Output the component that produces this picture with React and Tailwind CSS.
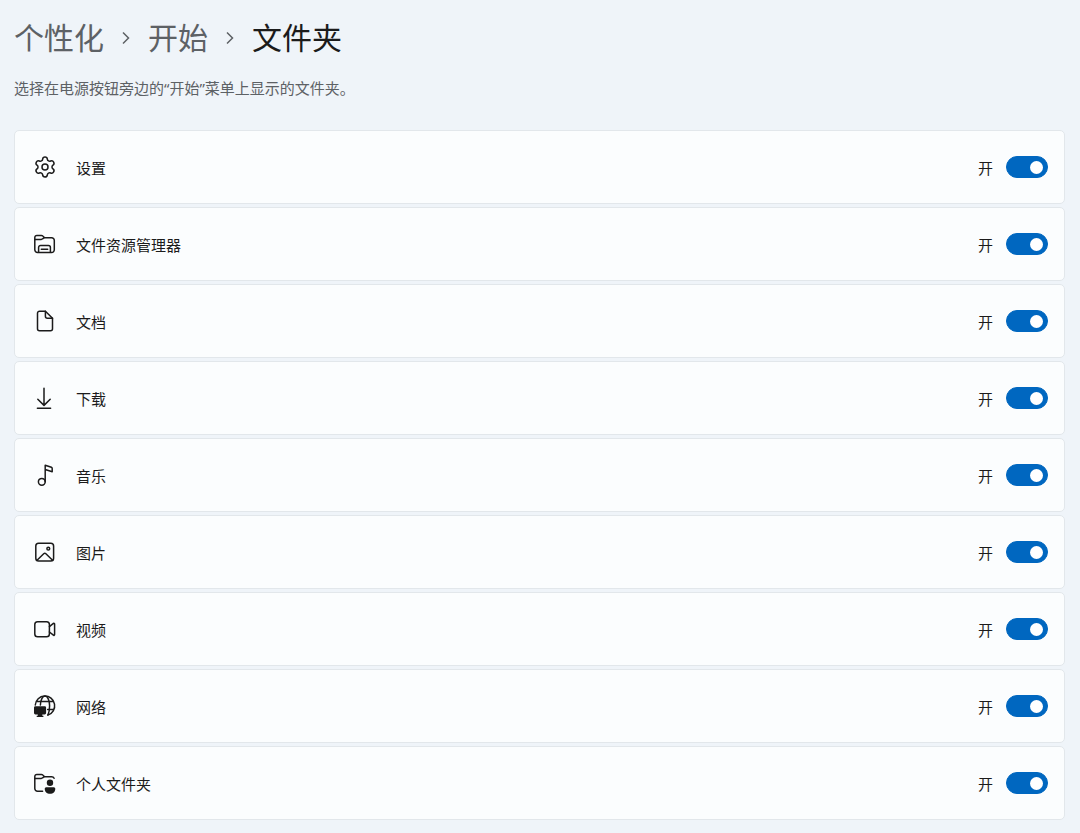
import { useState } from "react";
import { Settings } from "lucide-react";

function Icon({ children }) {
    return (
        <svg
            viewBox="0 0 24 24"
            fill="none"
            stroke="currentColor"
            strokeWidth="1.5"
            strokeLinecap="round"
            strokeLinejoin="round"
            className="size-6 shrink-0"
            aria-hidden="true"
        >
            {children}
        </svg>
    );
}

const SettingsIcon = () => (
    <Settings className="size-6 shrink-0" strokeWidth={1.5} aria-hidden="true" />
);

const ExplorerIcon = () => (
    <Icon>
        <path d="M1.8 7.4V5.4a2 2 0 0 1 2-2h4.6a2 2 0 0 1 1.4.6l1.8 1.7h7a2.7 2.7 0 0 1 2.7 2.7v9.4a2.7 2.7 0 0 1-2.7 2.7H4.5a2.7 2.7 0 0 1-2.7-2.7z" />
        <path d="M1.8 7.4h6.4a2 2 0 0 0 1.4-.6l1.6-1.1" />
        <path d="M5.6 20.3v-4.8a2 2 0 0 1 2-2h7.8a2 2 0 0 1 2 2v4.8M8.3 17.3h6.4" />
    </Icon>
);

const DocumentIcon = () => (
    <Icon>
        <path d="M12.4 2.2H6.5a2 2 0 0 0-2 2v15.6a2 2 0 0 0 2 2h11a2 2 0 0 0 2-2V9.3z" />
        <path d="M12.4 2.2v5.1a2 2 0 0 0 2 2h5.1" />
    </Icon>
);

const DownloadIcon = () => (
    <Icon>
        <path d="M11 2.2v17M4.8 13.2l6.2 6.2 6.2-6.2M4.4 22.2h13.2" />
    </Icon>
);

const MusicIcon = () => (
    <Icon>
        <circle cx="8.8" cy="18.8" r="3.4" />
        <path d="M12.2 18.8V2.2l6.2 2.1a1.2 1.2 0 0 1 .8 1.1v3.4l-7-2.3" />
    </Icon>
);

const PictureIcon = () => (
    <Icon>
        <rect x="2.8" y="3.2" width="17.8" height="17.8" rx="2.8" />
        <circle cx="15.3" cy="8.7" r="1.4" />
        <path d="m4 20.2 6.7-6.4a1.6 1.6 0 0 1 2.2 0l6.7 6.4" />
    </Icon>
);

const VideoIcon = () => (
    <Icon>
        <rect x="1.8" y="4.8" width="14.6" height="15" rx="2.8" />
        <path d="m16.4 9.6 4-3.2c.5-.4 1.2 0 1.2.6v10.6c0 .6-.7 1-1.2.6l-4-3.2" />
    </Icon>
);

const NetworkIcon = () => (
    <Icon>
        <path d="M2.3 11a9.7 9.7 0 1 1 12.6 10M3.2 7.6h17.4M14.6 15.4h6.2" />
        <path d="M7.4 11C7.6 6 9.5 2.1 12 2.1s4.6 4.2 4.6 9.6-.7 7.3-1.7 9.3" />
        <path
            d="M2.4 12.2h9.3a1.4 1.4 0 0 1 1.4 1.4V19a1.4 1.4 0 0 1-1.4 1.4H9.3v1.4h1.1v1.1H3.7v-1.1h1.1v-1.4H2.4A1.4 1.4 0 0 1 1 19v-5.4a1.4 1.4 0 0 1 1.4-1.4z"
            fill="currentColor"
            stroke="none"
        />
    </Icon>
);

const PersonalFolderIcon = () => (
    <Icon>
        <path d="M9.6 20.3H4.5a2.7 2.7 0 0 1-2.7-2.7V5.4a2 2 0 0 1 2-2h4.6a2 2 0 0 1 1.4.6l1.8 1.7h7c1.1 0 2.1.6 2.5 1.6" />
        <path d="M1.8 7.4h6.4a2 2 0 0 0 1.4-.6l1.6-1.1" />
        <g fill="currentColor" stroke="none">
            <circle cx="17" cy="11.7" r="3.2" />
            <path d="M13.2 16.2h7.6a1.5 1.5 0 0 1 1.5 1.5c0 3-2.1 5-5.3 5s-5.3-2-5.3-5a1.5 1.5 0 0 1 1.5-1.5z" />
        </g>
    </Icon>
);

const folders = [
    { id: "settings", label: "设置", icon: SettingsIcon },
    { id: "explorer", label: "文件资源管理器", icon: ExplorerIcon },
    { id: "documents", label: "文档", icon: DocumentIcon },
    { id: "downloads", label: "下载", icon: DownloadIcon },
    { id: "music", label: "音乐", icon: MusicIcon },
    { id: "pictures", label: "图片", icon: PictureIcon },
    { id: "videos", label: "视频", icon: VideoIcon },
    { id: "network", label: "网络", icon: NetworkIcon },
    { id: "personal", label: "个人文件夹", icon: PersonalFolderIcon },
];

function Chevron() {
    return (
        <svg
            viewBox="0 0 8 14"
            fill="none"
            stroke="currentColor"
            strokeWidth="1.5"
            className="h-3.5 w-2"
            aria-hidden="true"
        >
            <path d="m1 1.5 5.5 5.5L1 12.5" />
        </svg>
    );
}

function FolderRow({ id, label, icon: RowIcon }) {
    const [on, setOn] = useState(true);

    return (
        <li className="flex items-center rounded-[5px] border border-[#e2e7eb] bg-[#fbfdfe] py-6 pr-4 pl-[18px]">
            <RowIcon />
            <label htmlFor={id} className="flex-1 pt-0.5 pl-[19px] leading-5">
                {label}
            </label>
            <span className="pt-0.5 pr-[13px] leading-5">{on ? "开" : "关"}</span>
            <input
                id={id}
                type="checkbox"
                role="switch"
                checked={on}
                onChange={(e) => setOn(e.target.checked)}
                className="flex h-[22px] w-[42px] cursor-pointer appearance-none items-center rounded-full border border-[#8a8a8a] px-1 before:size-[13px] before:rounded-full before:bg-[#5c5c5c] checked:justify-end checked:border-[#0067c0] checked:bg-[#0067c0] checked:before:bg-white"
            />
        </li>
    );
}

export default function App() {
    return (
        <main className="min-h-screen bg-[#eff4f9] pt-4 pr-[15px] pb-3.5 pl-3.5 font-['Noto_Sans','Noto_Sans_CJK_SC',sans-serif] text-[15px] text-[#1b1b1b]">
            {/* Breadcrumb */}
            <nav>
                <ol className="flex items-center gap-[18px] text-[30px] leading-11 text-[#5d6165]">
                    <li>
                        <a href="#">个性化</a>
                    </li>
                    <li>
                        <Chevron />
                    </li>
                    <li>
                        <a href="#">开始</a>
                    </li>
                    <li>
                        <Chevron />
                    </li>
                    <li>
                        <h1 className="text-[#1b1b1b]">文件夹</h1>
                    </li>
                </ol>
            </nav>

            <p className="mt-4 leading-6 text-[#5d6165]">
                选择在电源按钮旁边的“开始”菜单上显示的文件夹。
            </p>

            {/* Folder switches */}
            <ul className="mt-[30px] flex flex-col gap-[3px]">
                {folders.map((folder) => (
                    <FolderRow key={folder.id} {...folder} />
                ))}
            </ul>
        </main>
    );
}
